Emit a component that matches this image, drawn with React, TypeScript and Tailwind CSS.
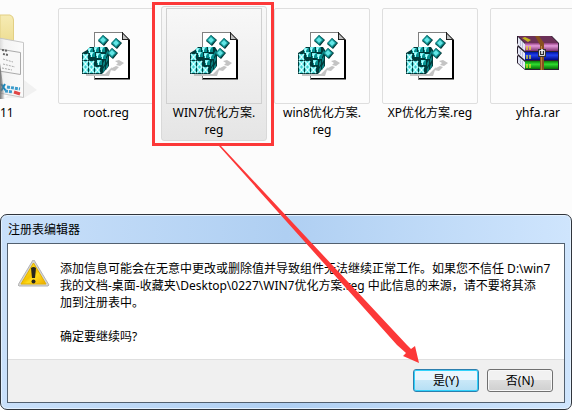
import type { ReactNode } from 'react';

const FRONT = [
  [1, 22],
  [1, 29],
  [7, 29],
  [1, 35],
  [7, 35],
  [13, 35],
];

const BACK = [
  [6, 16],
  [12, 15],
  [18, 15],
  [8, 20],
  [14, 21],
  [15, 28],
  [19, 22],
];

const SIDES = [
  [21, 29],
  [24, 25],
  [24, 19],
  [21, 35],
  [24, 32],
];

const DIAMONDS = [
  [21, 8],
  [34, 11],
  [30, 21],
];

function RegIcon() {
  return (
    <svg className="h-12 w-12" viewBox="0 0 48 48" aria-hidden="true">
      <path d="M12 0H40L48 8V48H12Z" fill="#808080" />
      <path d="M13 47H48V8L40 0V8H46V46H13Z" fill="#000" />
      <path d="M13 1H40V8H46V46H13Z" fill="#fff" />
      <path d="M41 2L46 7H41Z" fill="#c0c0c0" />
      <path d="M40.500 0V7.500H47" fill="none" stroke="#222" />
      <path d="M33 29L37 28L42 31L38 34L34 33L36 31ZM30 36L34 34L37 35L33 39L28 38ZM4 42H23L30 35L27 44H4Z" fill="#c4c4c4" />
      <path d="M0 21L5 18L8 15H25L27 18V34L20 42H0Z" fill="#003a3a" />
      {BACK.map(([x, y]) => (
        <g key={`${x}-${y}`}>
          <path d={`M${x} ${y}h5v5h-5z`} fill="#089090" />
          <path d={`M${x} ${y}h4l-2 3h-2z`} fill="#7df0f0" />
          <path d={`M${x + 1} ${y + 1}h1v4h-1z`} fill="#b8ffff" />
        </g>
      ))}
      {SIDES.map(([x, y]) => (
        <path key={`${x}-${y}`} d={`M${x} ${y + 2}l2-3v4l-2 3z`} fill="#0a8080" />
      ))}
      {FRONT.map(([x, y]) => (
        <g key={`${x}-${y}`}>
          <path d={`M${x} ${y}h5v6h-5z`} fill="#3ccccc" />
          <path d={`M${x} ${y}l5 6M${x + 5} ${y}l-5 6`} stroke="#b4ffff" strokeWidth="1.5" />
          <path d={`M${x + 2} ${y + 2}h1v2h-1z`} fill="#e8ffff" />
        </g>
      ))}
      {DIAMONDS.map(([x, y]) => (
        <g key={`${x}-${y}`}>
          <path d={`M${x} ${y - 5}l6 5-5 6-6-5z`} fill="#002f2f" />
          <path d={`M${x} ${y - 5}l5 5-5 5-5-5z`} fill="#108c8c" />
          <path d={`M${x} ${y - 3}l3 3-3 3-3-3z`} fill="#62e6e6" />
        </g>
      ))}
    </svg>
  );
}

function RarIcon() {
  return (
    <svg className="h-12 w-12" viewBox="-3 -4 48 48" aria-hidden="true">
      <defs>
        <linearGradient id="purple" x2="0" y2="1">
          <stop offset="0" stopColor="#8d3b7c" />
          <stop offset=".35" stopColor="#e59bdb" />
          <stop offset="1" stopColor="#7b2f6d" />
        </linearGradient>
        <linearGradient id="blue" x2="0" y2="1">
          <stop offset="0" stopColor="#0014a0" />
          <stop offset=".4" stopColor="#2040f0" />
          <stop offset="1" stopColor="#000880" />
        </linearGradient>
        <linearGradient id="green" x2="0" y2="1">
          <stop offset="0" stopColor="#087a08" />
          <stop offset=".4" stopColor="#30dd30" />
          <stop offset="1" stopColor="#067006" />
        </linearGradient>
      </defs>
      <path d="M0 0H35L42 7V34H8L0 27V20L1 19L0 17V11L1 9L0 7Z" fill="#2a2030" />
      <path d="M1 0H34L41 7H8Z" fill="#6c3158" />
      <path d="M1 1L8 8V15L1 9ZM1 11L8 17V24L1 18ZM1 20L8 26V33L1 27Z" fill="#e6e8f6" />
      <path d="M3.500 4V10M5.500 6V12M3.500 14V19M5.500 16V21M3.500 23V28M5.500 25V30" stroke="#bcc0da" />
      <path d="M8 7H41V15H8Z" fill="url(#purple)" />
      <path d="M8 16H41V24H8Z" fill="url(#blue)" />
      <path d="M8 25H41V33H8Z" fill="url(#green)" />
      <path d="M5 2L8 1L14 4L11 6Z" fill="#c4b51d" />
      <path d="M10 10V14M13 10V14M10 19V23M13 19V23M10 28V32M13 28V32" stroke="#eadf2c" strokeWidth="1.3" />
      <path d="M18 0H22L27 7V34H23V9Z" fill="#87501f" />
      <path d="M24.500 10V34" stroke="#bd813d" />
      <path d="M21 13H29V21H21Z" fill="#323232" />
      <path d="M22.500 14.500H27.500V19.500H22.500Z" fill="none" stroke="#ddd" />
      <path d="M25 13V18" stroke="#fff" strokeWidth="1.5" />
    </svg>
  );
}

function FolderIcon() {
  return (
    <svg className="h-24 w-[52px]" viewBox="0 0 52 96" aria-hidden="true">
      <defs>
        <linearGradient id="folder" x2="0" y2="1">
          <stop offset="0" stopColor="#f6ebb4" />
          <stop offset="1" stopColor="#e9d580" />
        </linearGradient>
        <linearGradient id="sheet" x2="1">
          <stop offset="0" stopColor="#d5d5d5" />
          <stop offset=".2" stopColor="#f3f3f3" />
          <stop offset="1" stopColor="#fbfbfb" />
        </linearGradient>
        <linearGradient id="fold">
          <stop offset="0" stopColor="#777" />
          <stop offset="1" stopColor="#777" stopOpacity="0" />
        </linearGradient>
      </defs>
      <path d="M24 72L37 82L24 90H5Z" fill="#f1f1f1" />
      <path d="M0 7H10Q13.500 8 13.500 12V50H0Z" fill="url(#folder)" stroke="#e2cf83" />
      <path d="M-1 30L23.500 34.500V89.500L-1 85Z" fill="url(#sheet)" stroke="#c6c6c6" />
      <path d="M-1 41L20.500 44.500V66.500L-1 63" fill="#f7f7f7" stroke="#aaa" />
      <path d="M2 42L8 43M3 46L8 47" stroke="#666" strokeWidth="2" strokeDasharray="2 1" />
      <path d="M3 51L13 54M3 56L15 59M2 60L12 62" stroke="#aaa" strokeDasharray="2 1" />
      <path d="M1 76L6 83M5 76L1 83" stroke="#1687bd" strokeWidth="2" />
      <path d="M7 79L20 81M5 83L13 84" stroke="#3b9bcb" strokeWidth="3" strokeDasharray="3 1" />
      <path d="M14 84L20 86" stroke="#e04646" strokeWidth="3" />
      <path d="M0 55L5 91H0Z" fill="url(#fold)" />
    </svg>
  );
}

function WarningIcon() {
  return (
    <svg className="h-7 w-8 shrink-0" viewBox="0 1 32 28" role="img" aria-label="警告">
      <defs>
        <linearGradient id="warn" x2="1" y2="1">
          <stop offset="0" stopColor="#ffed49" />
          <stop offset=".5" stopColor="#f5c400" />
          <stop offset=".6" stopColor="#ffdc1b" />
          <stop offset="1" stopColor="#eda900" />
        </linearGradient>
      </defs>
      <path d="M15 1H16L31 26L30 27H1L0 26Z" fill="#d4d4d4" stroke="#b4b4b4" strokeLinejoin="round" />
      <path d="M15.500 4L28 25H3Z" fill="url(#warn)" stroke="#e2b100" />
      <path d="M13 9Q15.500 7 18 9L17 19H14Z" fill="#25251f" />
      <circle cx="15.500" cy="22.500" r="2" fill="#25251f" />
    </svg>
  );
}

type FileItemProps = {
  icon: ReactNode;
  children: ReactNode;
  selected?: boolean;
};

function FileItem({ icon, children, selected = false }: FileItemProps) {
  return (
    <li
      className={
        selected
          ? 'flex w-[106px] shrink-0 flex-col items-center rounded-[3px] border border-[#d9d9d9] bg-linear-to-b from-[#f8f8f8] to-[#e5e5e5] pt-px pb-0.5'
          : 'flex w-[106px] shrink-0 flex-col items-center border border-transparent pt-px pb-0.5'
      }
    >
      <div
        className={
          selected
            ? 'flex h-24 w-24 items-center justify-center border border-[#d0d0d0]'
            : 'flex h-24 w-24 items-center justify-center rounded-[2px] border border-[#dedede]'
        }
      >
        {icon}
      </div>
      <p className="text-center leading-[17px] whitespace-nowrap">{children}</p>
    </li>
  );
}

function FileList() {
  return (
    <ul className="flex items-start gap-0.5 overflow-hidden pt-1.5">
      <li className="flex w-[51px] shrink-0 flex-col pt-0.5">
        <FolderIcon />
        <span className="leading-[17px]">11</span>
      </li>
      <FileItem icon={<RegIcon />}>root.reg</FileItem>
      <FileItem icon={<RegIcon />} selected>
        WIN7优化方案.
        <br />
        reg
      </FileItem>
      <FileItem icon={<RegIcon />}>
        win8优化方案.
        <br />
        reg
      </FileItem>
      <FileItem icon={<RegIcon />}>XP优化方案.reg</FileItem>
      <FileItem icon={<RarIcon />}>yhfa.rar</FileItem>
    </ul>
  );
}

function ConfirmDialog() {
  return (
    <section
      role="dialog"
      aria-labelledby="dialog-title"
      className="mt-[73px] rounded-[7px] border border-[#30353c] bg-linear-to-r from-[#c9e0fa] via-[#afcff2] to-[#cfe5fd] px-1.5 pb-1.5 shadow-[inset_0_0_0_1px_#e3f1ff]"
    >
      <h1 id="dialog-title" className="px-px pt-1.5 pb-[5px] leading-[17px]">
        注册表编辑器
      </h1>
      <div className="border border-[#52606f] bg-white">
        <div className="flex gap-2.5 pt-4 pr-1 pb-3.5 pl-2.5">
          <WarningIcon />
          <div className="leading-[17px] whitespace-nowrap">
            <p>
              添加信息可能会在无意中更改或删除值并导致组件无法继续正常工作。如果您不信任 D:\win7
              <br />
              我的文档-桌面-收藏夹\Desktop\0227\WIN7优化方案.reg 中此信息的来源，请不要将其添
              <br />
              加到注册表中。
            </p>
            <p className="pt-[17px]">确定要继续吗?</p>
          </div>
        </div>
        <div className="flex justify-end gap-2 border-t border-[#dfdfdf] bg-[#f0f0f0] px-[11px] pt-[9px] pb-2.5">
          <button
            type="button"
            className="h-[23px] w-[66px] rounded-[3px] border border-[#2c7fae] bg-linear-to-b from-[#eaf6fd] from-50% via-[#c9e8f8] via-50% to-[#b5dff5] leading-[17px] shadow-[inset_0_0_0_1px_#31d2fb]"
          >
            是(Y)
          </button>
          <button
            type="button"
            className="h-[23px] w-[66px] rounded-[3px] border border-[#707070] bg-linear-to-b from-[#f1f1f1] from-50% via-[#dddddd] via-50% to-[#cfcfcf] leading-[17px] shadow-[inset_0_0_0_1px_#f8f8f8]"
          >
            否(N)
          </button>
        </div>
      </div>
    </section>
  );
}

// Red frame and arrow drawn over the windows
function Annotation() {
  return (
    <svg
      className="pointer-events-none absolute top-0 left-0 h-[410px] w-[572px]"
      viewBox="0 0 572 410"
      aria-hidden="true"
    >
      <rect x="153.500" y="3.500" width="119" height="141" fill="none" stroke="#fc3838" strokeWidth="3" />
      <path d="M219 146L221 146L407 345L411 349L415 346L419 363L403 356L406 353L397 345Z" fill="#fc3838" />
    </svg>
  );
}

export default function App() {
  return (
    <main className="relative min-h-screen overflow-hidden bg-[#fcfcfc] font-['Noto_Sans','Noto_Sans_CJK_SC',sans-serif] text-xs text-black">
      <FileList />
      <ConfirmDialog />
      <Annotation />
    </main>
  );
}
